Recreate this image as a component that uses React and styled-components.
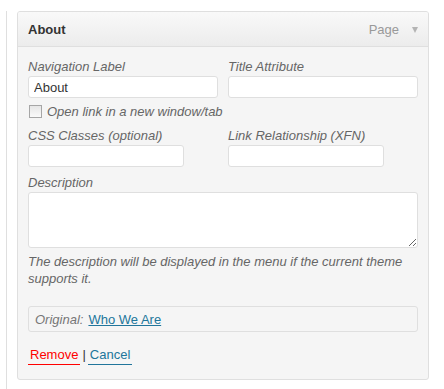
import React, { useState } from 'react';
import styled, { createGlobalStyle } from 'styled-components';

const GlobalStyle = createGlobalStyle`
  html, body {
    margin: 0;
    padding: 0;
    background: #fff;
  }
  body {
    font-family: "Liberation Sans", Arial, sans-serif;
    font-size: 13px;
    color: #333;
  }
  * {
    box-sizing: border-box;
  }
`;

const Page = styled.div`
  height: 389px;
  padding: 11px 0 0 6px;
`;

const Rail = styled.div`
  height: 100%;
  border-left: 1px solid #dfdfdf;
  padding-left: 10px;
`;

const Card = styled.div`
  width: 412px;
  border: 1px solid #dfdfdf;
  border-radius: 3px;
  background: #f5f5f5;
  overflow: hidden;
`;

const Header = styled.div`
  display: flex;
  align-items: center;
  height: 35px;
  padding: 0 10px;
  border-bottom: 1px solid #dfdfdf;
  background: linear-gradient(to bottom, #f9f9f9, #ececec);
`;

const Title = styled.span`
  flex: 1;
  font-weight: bold;
  color: #333;
`;

const ItemType = styled.span`
  color: #999;
  font-size: 13px;
  margin-right: 13px;
`;

// small down-pointing triangle next to the item type
const Arrow = styled.span`
  width: 0;
  height: 0;
  margin-top: 1px;
  border-left: 3.5px solid transparent;
  border-right: 3.5px solid transparent;
  border-top: 6px solid #b4b4b4;
`;

const Body = styled.div`
  padding: 12px 10px 14px 10px;
`;

const Row = styled.div`
  display: flex;
  gap: ${(p) => p.$gap ?? 10}px;
  margin-top: ${(p) => p.$top || 0}px;
`;

const Field = styled.div`
  display: flex;
  flex-direction: column;
  width: ${(p) => p.$width || 190}px;
`;

const Label = styled.label`
  font-style: italic;
  color: #666;
  line-height: 16px;
  margin-bottom: 1px;
`;

const TextInput = styled.input`
  height: 22px;
  width: 100%;
  border: 1px solid #dfdfdf;
  border-radius: 3px;
  background: #fff;
  padding: 0 5px;
  font-family: "Liberation Sans", Arial, sans-serif;
  font-size: 13px;
  color: #333;
  outline: none;
`;

const TextArea = styled.textarea`
  display: block;
  width: 390px;
  height: 56px;
  border: 1px solid #dfdfdf;
  border-radius: 3px;
  background: #fff;
  font-family: "Liberation Sans", Arial, sans-serif;
  font-size: 13px;
  outline: none;
  resize: both;
`;

const CheckRow = styled.label`
  display: flex;
  align-items: center;
  gap: 5px;
  height: 16px;
  margin-top: 5px;
  padding-left: 1px;
  font-style: italic;
  color: #666;
`;

const CheckBox = styled.input`
  appearance: none;
  margin: 0;
  width: 13px;
  height: 13px;
  border: 1px solid #a6a6a6;
  background: linear-gradient(to bottom, #e6e6e6, #fafafa);
`;

const Help = styled.p`
  margin: 5px 0 0;
  font-style: italic;
  color: #666;
  line-height: 17px;
`;

const Original = styled.div`
  display: flex;
  align-items: center;
  height: 26px;
  margin-top: 19px;
  padding: 0 6px;
  border: 1px solid #dfdfdf;
  border-radius: 3px;
  background: #f5f5f5;
`;

const OriginalLabel = styled.span`
  font-style: italic;
  color: #777;
  margin-right: 5px;
`;

const Link = styled.a`
  color: #21759b;
  text-decoration: underline;
  cursor: pointer;
`;

const Actions = styled.div`
  display: flex;
  align-items: flex-start;
  gap: 2px;
  margin-top: 15px;
  line-height: 16px;
  color: #333;
`;

const ActionLink = styled.a`
  color: ${(p) => (p.$danger ? '#f00' : '#21759b')};
  border-bottom: 1px solid ${(p) => (p.$danger ? '#f00' : '#21759b')};
  padding: 0 2px 1px;
  text-decoration: none;
  cursor: pointer;
`;

export default function App() {
  const [label, setLabel] = useState('About');

  return (
    <>
      <GlobalStyle />
      <Page>
        <Rail>
          <Card>
            <Header>
              <Title>About</Title>
              <ItemType>Page</ItemType>
              <Arrow />
            </Header>
            <Body>
              <Row>
                <Field>
                  <Label>Navigation Label</Label>
                  <TextInput value={label} onChange={(e) => setLabel(e.target.value)} />
                </Field>
                <Field>
                  <Label>Title Attribute</Label>
                  <TextInput />
                </Field>
              </Row>
              <CheckRow>
                <CheckBox type="checkbox" />
                Open link in a new window/tab
              </CheckRow>
              <Row $top={9} $gap={44}>
                <Field $width={156}>
                  <Label>CSS Classes (optional)</Label>
                  <TextInput />
                </Field>
                <Field $width={156}>
                  <Label>Link Relationship (XFN)</Label>
                  <TextInput />
                </Field>
              </Row>
              <Row $top={8}>
                <Field $width={390}>
                  <Label>Description</Label>
                  <TextArea />
                </Field>
              </Row>
              <Help>
                The description will be displayed in the menu if the current theme supports it.
              </Help>
              <Original>
                <OriginalLabel>Original:</OriginalLabel>
                <Link>Who We Are</Link>
              </Original>
              <Actions>
                <ActionLink $danger>Remove</ActionLink>
                <span>|</span>
                <ActionLink>Cancel</ActionLink>
              </Actions>
            </Body>
          </Card>
        </Rail>
      </Page>
    </>
  );
}
